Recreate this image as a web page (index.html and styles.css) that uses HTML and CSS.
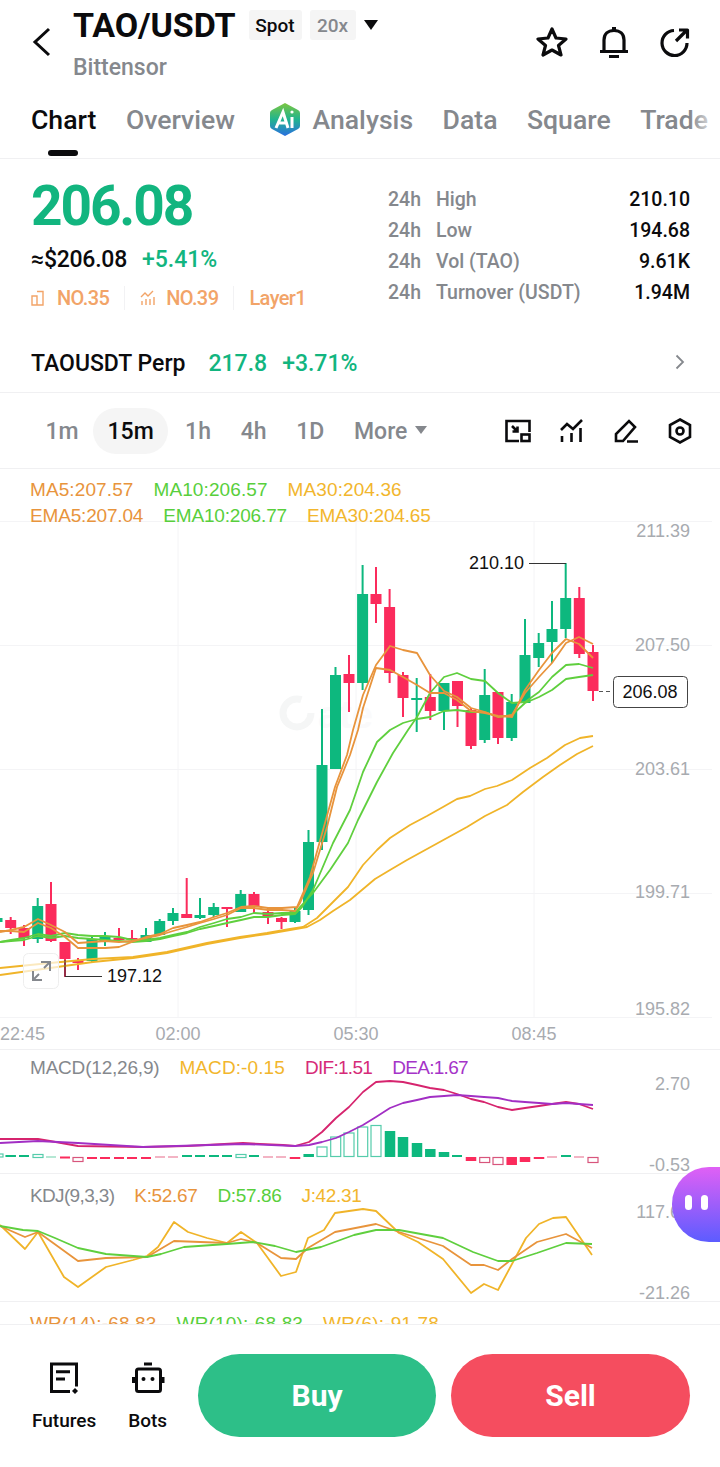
FILE: index.html
```html
<!DOCTYPE html>
<html lang="en">
<head>
    <meta charset="UTF-8">
    <meta name="viewport" content="width=device-width, initial-scale=1.0">
    <title>TAO/USDT</title>
    <link rel="stylesheet" href="styles.css">
</head>
<body>
<div class="page">
    <div class="topbar">
        <svg class="back" viewBox="0 0 20 30"><path d="M17 2 L3 15 L17 28"/></svg>
        <div class="pair">
            <div class="pair-line">
                <span class="pair-name">TAO/USDT</span>
                <span class="badge badge-dark">Spot</span>
                <span class="badge">20x</span>
                <span class="caret"></span>
            </div>
            <div class="pair-sub">Bittensor</div>
        </div>
        <div class="top-icons">
            <svg class="top-icon" viewBox="0 0 32 32"><path d="M16 3 L20 12 L30 13 L22.500 19.500 L25 29 L16 24 L7 29 L9.500 19.500 L2 13 L12 12 Z"/></svg>
            <svg class="top-icon" viewBox="0 0 32 32"><path d="M2 25.500 H30 M6 25.500 V14 C6 8 10 4.500 16 4.500 C22 4.500 26 8 26 14 V25.500 M14 2.500 H18 M11 30.500 H21"/></svg>
            <svg class="top-icon" viewBox="0 0 32 32"><path d="M15 4.500 A12.500 12.500 0 1 0 28 17 M17 15 L27 5 M20 4 H28.500 V12.500"/></svg>
        </div>
    </div>

    <div class="tabs">
        <span class="tab tab-active">Chart</span>
        <span class="tab">Overview</span>
        <span class="tab tab-ai">
            <svg class="ai-icon" viewBox="0 0 32 35">
                <defs>
                    <linearGradient id="aiFill" x1="0" y1="0" x2="0" y2="1">
                        <stop offset="0" stop-color="#7cc63f"/>
                        <stop offset="0.5" stop-color="#20b48f"/>
                        <stop offset="1" stop-color="#2a6fe0"/>
                    </linearGradient>
                </defs>
                <path d="M16 1 L29 8 Q31 9 31 11 V24 Q31 26 29 27 L16 34 L3 27 Q1 26 1 24 V11 Q1 9 3 8 Z" fill="url(#aiFill)"/>
                <path class="ai-mark" d="M7 26 L14 10 L19 26 M10 21 H17 M23 15 V26"/>
                <circle cx="23" cy="10" r="1.600" fill="#fff"/>
            </svg>
            Analysis
        </span>
        <span class="tab">Data</span>
        <span class="tab">Square</span>
        <span class="tab">Trade</span>
        <span class="tabs-fade"></span>
    </div>

    <div class="summary">
        <div class="price-col">
            <div class="price">206.08</div>
            <div class="price-sub">
                <span class="usd">≈$206.08</span>
                <span class="pct">+5.41%</span>
            </div>
            <div class="tags">
                <span class="tag">
                    <svg class="tag-icon" viewBox="0 0 16 16"><path d="M1 6 H6 V15 H1 Z M6 1.500 H12 V15 H6"/></svg>
                    NO.35
                </span>
                <span class="tag">
                    <svg class="tag-icon" viewBox="0 0 16 16"><path d="M1 7 L5 3 L8 6 L13 1 M2 15 V11 M6 15 V9 M10 15 V9 M14 15 V7"/></svg>
                    NO.39
                </span>
                <span class="tag">Layer1</span>
            </div>
        </div>
        <div class="stats">
            <span class="stat-h">24h</span><span class="stat-name">High</span><span class="stat-val">210.10</span>
            <span class="stat-h">24h</span><span class="stat-name">Low</span><span class="stat-val">194.68</span>
            <span class="stat-h">24h</span><span class="stat-name">Vol (TAO)</span><span class="stat-val">9.61K</span>
            <span class="stat-h">24h</span><span class="stat-name">Turnover (USDT)</span><span class="stat-val">1.94M</span>
        </div>
    </div>

    <div class="perp">
        <span class="perp-name">TAOUSDT Perp</span>
        <span class="perp-price">217.8</span>
        <span class="perp-pct">+3.71%</span>
        <svg class="perp-arrow" viewBox="0 0 10 16"><path d="M1.500 1.500 L8 8 L1.500 14.500"/></svg>
    </div>

    <div class="timeframes">
        <span class="tf tf-first">1m</span>
        <span class="tf tf-active">15m</span>
        <span class="tf">1h</span>
        <span class="tf">4h</span>
        <span class="tf">1D</span>
        <span class="tf tf-more">More<span class="tf-caret"></span></span>
        <div class="tf-icons">
            <svg class="tf-icon" viewBox="0 0 26 26"><path d="M14 23 H1.500 V3 H24.500 V14 M7 8 L12 13 M7.500 13.500 H12.500 V8.500"/><rect x="16.500" y="16.500" width="8" height="6.500"/></svg>
            <svg class="tf-icon" viewBox="0 0 26 26"><path d="M2 12 L8 6 L14 11 L23 2 M3 24 V18 M12.500 24 V15 M21.500 24 V10"/></svg>
            <svg class="tf-icon" viewBox="0 0 26 26"><path d="M3 23 V16 L16 3 L22 9 L10 23 Z M14 23.500 H25"/></svg>
            <svg class="tf-icon" viewBox="0 0 26 26"><path d="M13 1.500 L23 7 V19 L13 24.500 L3 19 V7 Z"/><circle cx="13" cy="13" r="3.500"/></svg>
        </div>
    </div>

    <div class="pane pane-main">
        <svg class="pane-svg" viewBox="0 469 720 581">
            <path class="grid" d="M0 521.500H712 M0 645.500H712 M0 769.500H712 M0 893.500H712 M0 1017.500H712 M178 521V1017 M356 521V1017 M534 521V1017"/>
            <circle class="mark" cx="297" cy="713" r="14" stroke-dasharray="70 18"/>
            <text class="mark-text" x="318" y="728">ate</text>

            <path class="wick up" d="M565.700 563V638 M552 601V663 M538.700 633V667 M525 619V703 M511.700 694V741 M484.700 669V743 M444 683V730 M416.700 678V732 M362.600 565V690 M335.500 667V769 M322 709V850 M308.500 830V915 M295 907V923 M240.700 890V912 M213.700 903V917 M200 898V919 M173 908V925 M159.700 919V935 M146 928V942 M105 932V946 M92 937V963 M37.700 898V943 M-3 915V926"/>
            <path class="wick down" d="M593 645V701 M579.300 587V658 M498 692V744 M471 708V749 M457.500 681V727 M430.300 674V720 M403 672V717 M389.600 589V683 M376 567V623 M349 655V712 M281.500 917V929 M268 908V924 M254 892V913 M227 907V927 M186.700 878V918 M132 930V943 M119 928V942 M78 958V970 M65 942V977 M51 882V942 M24 925V946 M10.700 917V934"/>
            <path class="body up" d="M565.700 598V629 M552 629V642 M538.700 643V658 M525 655V703 M511.700 702V738 M484.700 695V740 M444 683V711 M416.700 698V700 M362.600 594V683 M335.500 675V769 M322 765V842 M308.500 842V910 M295 911V922 M240.700 894V912 M213.700 907V915 M200 915V918 M173 913V921 M159.700 921V935 M146 935V942 M105 937V941 M92 939V961 M37.700 906V939 M-3 918V922"/>
            <path class="body down" d="M593 652V691 M579.300 598V654 M498 692V738 M471 710V746 M457.500 681V706 M430.300 697V711 M403 675V698 M389.600 607V673 M376 594V604 M349 674V683 M281.500 918V922 M268 912V916 M254 894V906 M227 907V909 M186.700 914V918 M132 938V940 M119 938V940 M78 960V963 M65 942V959 M51 904V941 M24 928V938 M10.700 920V928"/>

            <polyline class="ln ln-yellow" points="593,736 580,738 565,745 547,758 530,768 512,780 497,786 485,789 470,796 457,799 443,807 427,816 410,825 390,838 377,850 363,865 348,887 330,905 317,918 303,927 290,929 267,933 240,937 207,943 167,952 133,957 93,959 50,963 0,968"/>
            <polyline class="ln ln-yellow" points="593,746 577,754 560,765 543,777 523,792 507,805 485,816 467,827 447,838 427,849 407,860 390,870 375,879 350,900 333,911 320,920 307,927 290,930 267,934 240,938 207,944 167,953 133,958 93,962 50,968 0,975"/>
            <polyline class="ln ln-green" points="593,668 579,664 566,665 552,677 539,692 525,702 512,703 498,693 485,681 471,679 457,673 444,677 430,693 417,717 408,730 393,753 377,782 358,820 348,843 330,870 313,893 300,907 295,913 282,913 268,914 254,913 241,917 227,919 214,923 200,927 187,932 173,935 160,938 146,940 132,940 119,937 105,936 92,936 78,935 65,933 51,936 38,934 24,938 11,940 0,942"/>
            <polyline class="ln ln-green" points="593,675 579,677 566,679 552,690 539,697 525,703 512,715 498,717 485,712 471,712 457,710 444,711 430,717 417,719 403,723 390,730 377,742 363,772 350,810 333,843 313,890 302,907 295,914 282,915 268,917 254,917 241,920 227,923 214,926 200,929 187,933 173,936 160,939 146,941 132,942 119,941 105,940 92,939 78,938 65,936 51,938 38,936 24,940 11,941 0,942"/>
            <polyline class="ln ln-orange" points="593,644 579,637 566,643 552,663 539,677 525,693 512,715 498,717 485,712 471,708 457,697 444,691 430,675 417,653 403,650 390,646 376,665 363,695 353,730 347,755 335,787 323,830 310,877 297,907 282,908 268,908 254,906 241,907 227,913 214,917 200,922 187,925 173,928 160,934 146,937 132,942 119,947 105,948 92,948 78,948 65,937 51,928 38,923 24,932 11,931 0,931"/>
            <polyline class="ln ln-orange" points="593,658 579,644 566,639 552,653 539,670 525,690 512,717 498,716 485,713 471,711 457,700 444,693 430,693 417,685 403,677 390,670 376,668 363,708 358,730 350,755 337,787 327,827 313,873 300,903 295,911 282,910 268,910 254,908 241,908 227,915 214,919 200,923 187,927 173,931 160,935 146,938 132,941 119,942 105,941 92,942 78,943 65,932 51,925 38,919 24,927 11,930 0,932"/>

            <path class="note-line" d="M529 563.500H566 M65 960V976.500H102"/>
            <text class="note" x="469" y="569">210.10</text>
            <text class="note" x="107" y="982">197.12</text>
            <path class="dash" d="M599 691.500H612"/>
            <rect class="now-box" x="613.500" y="676.500" width="74" height="31" rx="4"/>
            <text class="note now" x="650" y="698">206.08</text>

            <rect class="expand" x="23.500" y="953.500" width="35" height="35" rx="5"/>
            <path class="expand-arrows" d="M33 971V980H42 M33 980L39 974 M50 971V962H41 M50 962L44 968"/>

            <text class="axis" x="690" y="537">211.39</text>
            <text class="axis" x="690" y="651">207.50</text>
            <text class="axis" x="690" y="775">203.61</text>
            <text class="axis" x="690" y="898">199.71</text>
            <text class="axis" x="690" y="1015">195.82</text>
            <text class="axis time" x="22.500" y="1040">22:45</text>
            <text class="axis time" x="178" y="1040">02:00</text>
            <text class="axis time" x="356" y="1040">05:30</text>
            <text class="axis time" x="534" y="1040">08:45</text>
        </svg>
        <div class="legend legend-main">
            <div class="legend-row legend-wide">
                <span class="c-orange">MA5:207.57</span>
                <span class="c-green">MA10:206.57</span>
                <span class="c-yellow">MA30:204.36</span>
            </div>
            <div class="legend-row">
                <span class="c-orange">EMA5:207.04</span>
                <span class="c-green">EMA10:206.77</span>
                <span class="c-yellow">EMA30:204.65</span>
            </div>
        </div>
    </div>

    <div class="pane pane-macd">
        <svg class="pane-svg" viewBox="0 1050 720 124">
            <path class="bar up" d="M390 1131V1157 M403 1137V1157 M417 1143V1157 M430.300 1149V1157 M444 1152V1157 M308.700 1154V1157 M10.700 1155V1157"/>
            <path class="bar down" d="M471 1157V1161 M525 1157V1162 M511.700 1157V1165 M539 1157V1159 M295 1157V1159"/>
            <path class="tick up" d="M19 1156H29 M182 1156H192 M195 1156H205 M209 1156H219 M222 1156H232 M249 1156H259 M452 1156H462 M561 1156H571"/>
            <path class="tick down" d="M60 1157.500H70 M87 1158H97 M100 1158H110 M114 1158H124 M127 1158H137 M141 1158H151"/>
            <path class="tick pale" d="M155 1157H165 M168 1157H178 M263 1157H273 M276 1157H286 M547 1157H557 M574 1157H584"/>
            <path class="tick pale-green" d="M46 1157H56"/>
            <rect class="hollow up" x="371" y="1125.500" width="10" height="31"/>
            <rect class="hollow up" x="357.700" y="1127" width="10" height="29.500"/>
            <rect class="hollow up" x="344" y="1133" width="10" height="23.500"/>
            <rect class="hollow up" x="330.700" y="1137" width="10" height="19.500"/>
            <rect class="hollow up" x="317" y="1147" width="10" height="9.500"/>
            <rect class="hollow up" x="-4" y="1154" width="7" height="3"/>
            <rect class="hollow up" x="33" y="1154.500" width="10" height="3"/>
            <rect class="hollow up" x="236" y="1154.500" width="10" height="3"/>
            <rect class="hollow down" x="588" y="1157.500" width="10" height="5"/>
            <rect class="hollow down" x="493" y="1157.500" width="10" height="7"/>
            <rect class="hollow down" x="479.700" y="1157.500" width="10" height="5"/>
            <rect class="hollow down" x="73" y="1157.500" width="10" height="4"/>
            <polyline class="ln ln-dif" points="0,1139 13,1139 38,1139 50,1141 78,1146 143,1147 187,1146 243,1143 283,1145 295,1146 309,1142 322,1132 336,1118 349,1107 363,1092 376,1082 390,1081 403,1082 417,1085 430,1088 444,1090 457,1094 471,1099 484,1102 498,1107 512,1110 525,1108 539,1106 552,1104 566,1102 579,1104 593,1109"/>
            <polyline class="ln ln-dea" points="0,1143 38,1141 78,1143 143,1147 243,1144 295,1146 309,1145 322,1142 336,1138 349,1132 363,1125 376,1117 390,1108 403,1103 417,1100 430,1097 444,1096 457,1095 471,1096 484,1097 498,1098 512,1101 525,1102 539,1103 552,1104 566,1103 579,1104 593,1105"/>
            <text class="axis" x="690" y="1090">2.70</text>
            <text class="axis" x="690" y="1171">-0.53</text>
        </svg>
        <div class="legend legend-row legend-macd">
            <span class="c-grey">MACD(12,26,9)</span>
            <span class="c-yellow">MACD:-0.15</span>
            <span class="c-dif">DIF:1.51</span>
            <span class="c-dea">DEA:1.67</span>
        </div>
    </div>

    <div class="pane pane-kdj">
        <svg class="pane-svg" viewBox="0 1174 720 128">
            <polyline class="ln ln-yellow" points="0,1225 25,1249 38,1232 64,1277 78,1287 106,1267 133,1260 147,1256 158,1247 174,1222 188,1232 207,1238 227,1243 241,1232 257,1243 281,1276 296,1272 308,1238 324,1230 335,1213 363,1209 376,1211 399,1233 418,1242 443,1259 471,1293 484,1284 498,1290 526,1238 539,1224 553,1218 566,1217 592,1255"/>
            <polyline class="ln ln-orange" points="0,1226 25,1237 38,1232 78,1261 106,1258 147,1257 174,1241 227,1243 241,1239 257,1243 281,1258 296,1259 308,1248 335,1232 376,1224 399,1232 443,1246 471,1265 484,1265 498,1270 512,1259 537,1242 566,1234 592,1248"/>
            <polyline class="ln ln-green" points="0,1226 23,1230 38,1231 55,1238 78,1248 106,1254 147,1257 161,1254 184,1247 227,1244 253,1242 275,1246 296,1252 321,1247 354,1235 376,1230 399,1230 443,1238 473,1252 498,1261 512,1261 537,1253 566,1243 592,1244"/>
            <text class="axis" x="690" y="1218">117.61</text>
            <text class="axis" x="690" y="1299">-21.26</text>
        </svg>
        <div class="legend legend-row legend-kdj">
            <span class="c-grey">KDJ(9,3,3)</span>
            <span class="c-orange">K:52.67</span>
            <span class="c-green">D:57.86</span>
            <span class="c-yellow">J:42.31</span>
        </div>
    </div>

    <div class="pane pane-wr">
        <div class="legend legend-row legend-wr">
            <span class="c-orange">WR(14):-68.83</span>
            <span class="c-green">WR(10):-68.83</span>
            <span class="c-yellow">WR(6):-91.78</span>
        </div>
    </div>

    <div class="bottombar">
        <div class="bottom-link">
            <svg class="bottom-icon" viewBox="0 0 32 32"><path d="M28.500 24.500 V2 H3.500 V29.500 H22 M8 9.700 H22 M8 17 H17"/><path class="dot" d="M27 26 L30 29 L27 32 L24 29 Z"/></svg>
            <span>Futures</span>
        </div>
        <div class="bottom-link">
            <svg class="bottom-icon" viewBox="0 0 32 32"><rect x="4.500" y="7" width="24" height="22.500" rx="2"/><path d="M12 2 H20 M1.500 15 V21 M31 15 V21"/><circle class="dot" cx="11.500" cy="17" r="2"/><circle class="dot" cx="20.500" cy="17" r="2"/></svg>
            <span>Bots</span>
        </div>
        <button class="trade-btn btn-buy">Buy</button>
        <button class="trade-btn btn-sell">Sell</button>
    </div>

    <div class="bubble"><span class="eye"></span><span class="eye"></span></div>
</div>
</body>
</html>
```

FILE: styles.css
```css
body {
    margin: 0;
    background-color: #fff;
    color: #0b0b0d;
    font-family: Roboto, "Liberation Sans", sans-serif;
}

.page {
    position: relative;
    width: 720px;
    height: 1467px;
    overflow: hidden;
    background-color: #fff;
}

/* top bar */
.topbar {
    display: flex;
    height: 96px;
    box-sizing: border-box;
    padding: 7px 29px 0 32px;
}

.back {
    width: 20px;
    height: 30px;
    margin-top: 20px;
    fill: none;
    stroke: #0b0b0d;
    stroke-width: 3;
}

.pair {
    margin-left: 21px;
}

.pair-line {
    display: flex;
    align-items: center;
    height: 36px;
}

.pair-name {
    font-size: 34px;
    font-weight: 700;
    letter-spacing: -0.1px;
    margin-right: 13px;
}

.badge {
    display: flex;
    align-items: center;
    justify-content: center;
    width: 46px;
    height: 30px;
    margin-right: 8px;
    background-color: #f5f5f5;
    border-radius: 3px;
    font-size: 19px;
    font-weight: 500;
    color: #85888d;
}

.badge-dark {
    width: 53px;
    color: #0b0b0d;
}

.caret {
    width: 0;
    height: 0;
    border-left: 7.5px solid transparent;
    border-right: 7.5px solid transparent;
    border-top: 10px solid #0b0b0d;
}

.pair-sub {
    margin-top: 12px;
    font-size: 23px;
    line-height: 26px;
    font-weight: 500;
    color: #85888d;
}

.top-icons {
    display: flex;
    gap: 29.5px;
    margin-left: auto;
    margin-top: 19px;
}

.top-icon {
    width: 32px;
    height: 32px;
    fill: none;
    stroke: #0b0b0d;
    stroke-width: 3.2;
    stroke-linejoin: round;
}

/* tabs */
.tabs {
    position: relative;
    display: flex;
    align-items: center;
    gap: 29.5px;
    height: 63px;
    box-sizing: border-box;
    padding: 0 0 15px 31px;
    border-bottom: 1px solid #f0f0f2;
    white-space: nowrap;
}

.tab {
    font-size: 26.6px;
    font-weight: 500;
    color: #85888d;
}

.tab-active {
    position: relative;
    color: #0b0b0d;
}

.tab-active::after {
    content: "";
    position: absolute;
    left: 17px;
    bottom: -21px;
    width: 30px;
    height: 6px;
    border-radius: 3px;
    background-color: #0b0b0d;
}

.tab-ai {
    display: flex;
    align-items: center;
    gap: 12px;
    margin-left: 4px;
}

.ai-icon {
    width: 32px;
    height: 35px;
}

.ai-mark {
    fill: none;
    stroke: #fff;
    stroke-width: 3;
}

.tabs-fade {
    position: absolute;
    top: 0;
    right: 0;
    width: 30px;
    height: 60px;
    background: linear-gradient(to right, rgba(255, 255, 255, 0), #fff);
}

/* price summary */
.summary {
    display: flex;
    justify-content: space-between;
    height: 175px;
    box-sizing: border-box;
    padding: 15px 30px 0 31px;
}

.price {
    font-size: 55px;
    line-height: 64px;
    font-weight: 700;
    letter-spacing: -2.1px;
    color: #12b57f;
}

.price-sub {
    display: flex;
    align-items: center;
    gap: 15px;
    margin-top: 6px;
    height: 30px;
}

.usd {
    font-size: 23px;
    font-weight: 500;
    letter-spacing: -0.25px;
}

.pct {
    font-size: 23px;
    font-weight: 500;
    color: #12b57f;
}

.tags {
    display: flex;
    align-items: center;
    margin-top: 9px;
    height: 30px;
    font-size: 20px;
    font-weight: 500;
    color: #f2a468;
}

.tag {
    display: flex;
    align-items: center;
    gap: 10px;
    padding-right: 15px;
    margin-right: 15px;
    border-right: 1px solid #f2f2f4;
    letter-spacing: -0.6px;
}

.tag:last-child {
    border-right: none;
}

.tag-icon {
    width: 16px;
    height: 16px;
    fill: none;
    stroke: #f2a468;
    stroke-width: 1.4;
}

.stats {
    display: grid;
    grid-template-columns: 48px 154px 100px;
    grid-auto-rows: 31px;
    align-items: center;
    margin-top: 10px;
    font-size: 19.5px;
    font-weight: 500;
    color: #85888d;
}

.stat-name {
    white-space: nowrap;
}

.stat-val {
    text-align: right;
    color: #0b0b0d;
}

/* perp row */
.perp {
    display: flex;
    align-items: center;
    height: 59px;
    box-sizing: border-box;
    padding: 1px 31px 0;
    border-bottom: 1px solid #f0f0f2;
    font-size: 23px;
    font-weight: 500;
}

.perp-price {
    margin-left: 23px;
    color: #12b57f;
}

.perp-pct {
    margin-left: 15px;
    color: #12b57f;
}

.perp-arrow {
    width: 10px;
    height: 16px;
    margin-left: auto;
    margin-right: 4px;
    margin-bottom: 3px;
    fill: none;
    stroke: #85888d;
    stroke-width: 1.8;
}

/* timeframes */
.timeframes {
    display: flex;
    align-items: center;
    height: 76px;
    box-sizing: border-box;
    padding: 0 27px 0 45.5px;
    border-bottom: 1px solid #f0f0f2;
    font-size: 23px;
    font-weight: 500;
    color: #85888d;
}

.tf {
    padding-top: 2px;
    margin-right: 29.7px;
}

.tf-first {
    margin-right: 14.5px;
}

.tf-active {
    display: flex;
    align-items: center;
    justify-content: center;
    width: 75px;
    height: 46px;
    box-sizing: border-box;
    margin-right: 17px;
    border-radius: 23px;
    background-color: #f5f5f5;
    color: #0b0b0d;
}

.tf-more {
    display: flex;
    align-items: center;
    margin-right: 0;
}

.tf-caret {
    width: 0;
    height: 0;
    margin-left: 8px;
    margin-bottom: 3px;
    border-left: 6px solid transparent;
    border-right: 6px solid transparent;
    border-top: 8px solid #85888d;
}

.tf-icons {
    display: flex;
    gap: 28px;
    margin-left: auto;
}

.tf-icon {
    width: 26px;
    height: 26px;
    fill: none;
    stroke: #0b0b0d;
    stroke-width: 2.6;
}

/* chart panes */
.pane {
    position: relative;
    box-sizing: border-box;
    border-bottom: 1px solid #f0f0f2;
    font-family: "Liberation Sans", Arial, sans-serif;
}

.pane-main {
    height: 581px;
}

.pane-macd {
    height: 124px;
}

.pane-kdj {
    height: 128px;
}

.pane-wr {
    height: 22px;
    border-bottom: none;
    overflow: hidden;
}

.pane-svg {
    position: absolute;
    top: 0;
    left: 0;
    width: 720px;
    height: calc(100% + 1px);
    overflow: visible;
}

.legend {
    position: relative;
    padding: 8.5px 0 0 30px;
    font-size: 19px;
    line-height: 25px;
    letter-spacing: -0.17px;
}

.legend-main {
    padding-top: 8px;
    line-height: 25.5px;
}

.legend-row {
    display: flex;
    gap: 20px;
}

.legend-wide {
    letter-spacing: 0.1px;
}

.legend-macd {
    padding-top: 4.5px;
}

.legend-macd .c-grey {
    letter-spacing: -0.2px;
}

.legend-macd .c-yellow {
    letter-spacing: 0.1px;
}

.legend-macd .c-dif,
.legend-macd .c-dea {
    letter-spacing: -0.7px;
}

.legend-kdj {
    letter-spacing: -0.35px;
}

.legend-kdj .c-grey {
    letter-spacing: -0.65px;
}

.legend-wr {
    letter-spacing: 0.15px;
}

.c-orange { color: #e8943c; }
.c-green { color: #58cf3c; }
.c-yellow { color: #f2b62d; }
.c-grey { color: #85888d; }
.c-dif { color: #d62a78; }
.c-dea { color: #a534c8; }

.grid {
    fill: none;
    stroke: #f4f4f6;
    stroke-width: 1;
}

.mark {
    fill: none;
    stroke: #f5f6f6;
    stroke-width: 7;
}

.mark-text {
    font-size: 38px;
    font-weight: 700;
    fill: #fafafb;
}

.wick, .body, .bar, .tick {
    fill: none;
}

.wick { stroke-width: 2; }
.body { stroke-width: 11; }
.bar { stroke-width: 10.500; }
.tick { stroke-width: 2; }

.up { stroke: #0db87e; }
.down { stroke: #fb2b5c; }
.tick.pale { stroke: #f3b4c4; }
.tick.pale-green { stroke: #b5e8d4; }

.hollow {
    fill: #fff;
    stroke-width: 1.200;
}

.hollow.up { stroke: #55ccab; }
.hollow.down { stroke: #d8557c; }

.ln {
    fill: none;
    stroke-width: 1.800;
    stroke-linejoin: round;
}

.ln-yellow { stroke: #f0b429; }
.ln-green { stroke: #5fcf3e; }
.ln-orange { stroke: #e8943c; }
.ln-dif { stroke: #d6246e; }
.ln-dea { stroke: #a22fc4; }

.note {
    font-size: 18px;
    fill: #111;
}

.now {
    text-anchor: middle;
}

.note-line {
    fill: none;
    stroke: #333;
    stroke-width: 1;
}

.dash {
    fill: none;
    stroke: #555;
    stroke-width: 1;
    stroke-dasharray: 4 3;
}

.now-box {
    fill: #fff;
    stroke: #444;
    stroke-width: 1;
}

.expand {
    fill: rgba(255, 255, 255, 0.7);
    stroke: #eee;
    stroke-width: 1;
}

.expand-arrows {
    fill: none;
    stroke: #85888d;
    stroke-width: 2;
}

.axis {
    font-size: 18px;
    fill: #a8abb0;
    text-anchor: end;
}

.time {
    text-anchor: middle;
}

/* bottom actions */
.bottombar {
    position: relative;
    display: flex;
    align-items: flex-start;
    height: 143px;
    box-sizing: border-box;
    padding: 29px 30px 0 32px;
    border-top: 1px solid #f0f0f2;
    background-color: #fff;
}

.bottom-link {
    display: flex;
    flex-direction: column;
    align-items: center;
    gap: 15px;
    margin-top: 8px;
    margin-right: 32px;
    font-size: 19px;
    font-weight: 500;
}

.bottom-icon {
    width: 32px;
    height: 32px;
    fill: none;
    stroke: #0b0b0d;
    stroke-width: 3;
    overflow: visible;
}

.dot {
    fill: #0b0b0d;
    stroke: none;
}

.trade-btn {
    height: 83px;
    width: 238px;
    border: none;
    border-radius: 42px;
    color: #fff;
    font-family: Roboto, "Liberation Sans", sans-serif;
    font-size: 30px;
    font-weight: 700;
}

.btn-buy {
    margin-left: -1px;
    margin-right: 15px;
    background-color: #2dbf88;
}

.btn-sell {
    width: 239px;
    background-color: #f54d5f;
}

/* floating helper */
.bubble {
    position: absolute;
    top: 1167px;
    left: 672px;
    display: flex;
    gap: 9px;
    align-items: center;
    justify-content: center;
    width: 48px;
    height: 75px;
    box-sizing: border-box;
    padding-bottom: 5px;
    border-radius: 37px 0 0 37px;
    background: linear-gradient(to bottom, #e060f5, #5c5cff);
}

.eye {
    width: 7px;
    height: 15px;
    border-radius: 4px;
    background-color: #fff;
}
```
